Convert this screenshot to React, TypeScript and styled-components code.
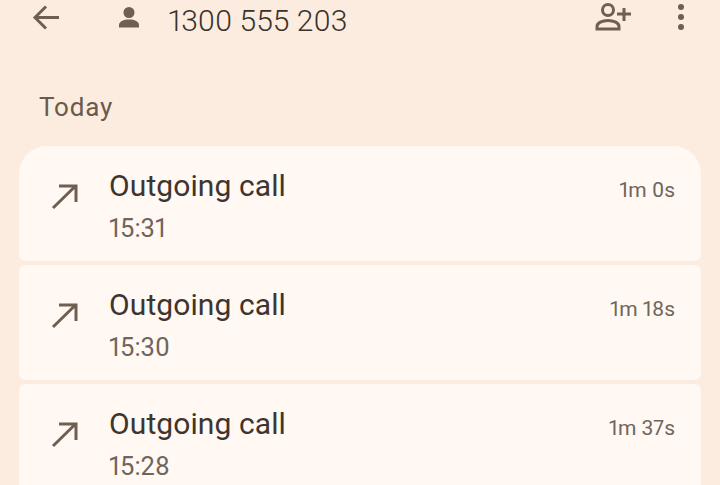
import { createGlobalStyle, styled } from 'styled-components'

const GlobalStyle = createGlobalStyle`
  html, body {
    margin: 0;
    padding: 0;
    background: #fcecdf;
    font-family: Roboto, "Liberation Sans", sans-serif;
    font-variant-numeric: proportional-nums;
  }
`

const Screen = styled.div`
  width: 720px;
  height: 485px;
  overflow: hidden;
  background: #fcecdf;
`

const Toolbar = styled.header`
  height: 42px;
  display: flex;
  align-items: center;
  padding: 0 35px 0 32px;
`

const IconSlot = styled.div`
  display: flex;
  color: #6f5f51;
`

const BackIcon = styled(IconSlot)`
  margin-bottom: 7px;
`

const Avatar = styled(IconSlot)`
  margin-left: 59px;
  margin-bottom: 7px;
`

const Phone = styled.h1`
  margin: 0 0 2px 28px;
  flex: 1;
  font-size: 30px;
  font-weight: 300;
  color: #3a312a;
`

const Actions = styled.div`
  display: flex;
  align-items: center;
  gap: 46px;
  margin-bottom: 8px;
`

const SectionTitle = styled.h2`
  margin: 46px 0 0 39px;
  height: 58px;
  font-size: 26px;
  line-height: 38px;
  font-weight: 450;
  letter-spacing: 0.8px;
  color: #6a5a4c;
`

const List = styled.ul`
  list-style: none;
  margin: 0;
  padding: 0 19px;
  display: flex;
  flex-direction: column;
  gap: 4px;
`

const Row = styled.li<{ $first?: boolean }>`
  height: 115px;
  box-sizing: border-box;
  display: flex;
  align-items: flex-start;
  padding: 20px 26px 0 31px;
  background: #fff8f3;
  border-radius: ${p => (p.$first ? '28px 28px 6px 6px' : '6px')};
`

const CallIcon = styled.div`
  display: flex;
  width: 59px;
  margin-top: 17px;
  color: #6f5f51;
`

const CallText = styled.div`
  flex: 1;
`

const CallTitle = styled.div`
  font-size: 30px;
  line-height: 40px;
  letter-spacing: 0.1px;
  color: #3e352e;
`

const CallTime = styled.div`
  margin-top: 2px;
  font-size: 25.5px;
  line-height: 40px;
  color: #6f655c;
`

const Duration = styled.div`
  margin-top: 6px;
  font-size: 21px;
  line-height: 36px;
  color: #6f655c;
`

const calls = [
  { id: 1, time: '15:31', duration: '1m 0s' },
  { id: 2, time: '15:30', duration: '1m 18s' },
  { id: 3, time: '15:28', duration: '1m 37s' },
]

export default function App() {
  return (
    <Screen>
      <GlobalStyle />
      <Toolbar>
        <BackIcon>
          <svg width="27" height="27" viewBox="0 0 27 27" fill="none" stroke="currentColor" strokeWidth="3">
            <path d="M27 13.500H3M14 2.500 3 13.500 14 24.500" />
          </svg>
        </BackIcon>
        <Avatar>
          <svg width="22" height="21" viewBox="0 0 22 21" fill="currentColor">
            <circle cx="11" cy="5.500" r="5.500" />
            <path d="M1 20.500v-2.500c0-3.500 4.500-5.500 10-5.500s10 2 10 5.500v2.500z" />
          </svg>
        </Avatar>
        <Phone>1300 555 203</Phone>
        <Actions>
          <IconSlot>
            <svg width="36" height="30" viewBox="0 0 36 30" fill="none" stroke="currentColor" strokeWidth="3">
              <circle cx="13" cy="8" r="5.500" />
              <path d="M2 27v-2.500c0-3.500 5-6 11-6s11 2.500 11 6V27zM22 12h14M29 6v13" />
            </svg>
          </IconSlot>
          <IconSlot>
            <svg width="8" height="30" viewBox="0 0 8 30" fill="currentColor">
              <circle cx="4" cy="5" r="3" />
              <circle cx="4" cy="15" r="3" />
              <circle cx="4" cy="25" r="3" />
            </svg>
          </IconSlot>
        </Actions>
      </Toolbar>
      <SectionTitle>Today</SectionTitle>
      <List>
        {calls.map((call, index) => (
          <Row key={call.id} $first={index === 0}>
            <CallIcon>
              <svg width="28" height="28" viewBox="0 0 28 28" fill="none" stroke="currentColor" strokeWidth="3">
                <path d="M3 25 25 3.500M9 3h17v16" />
              </svg>
            </CallIcon>
            <CallText>
              <CallTitle>Outgoing call</CallTitle>
              <CallTime>{call.time}</CallTime>
            </CallText>
            <Duration>{call.duration}</Duration>
          </Row>
        ))}
      </List>
    </Screen>
  )
}
